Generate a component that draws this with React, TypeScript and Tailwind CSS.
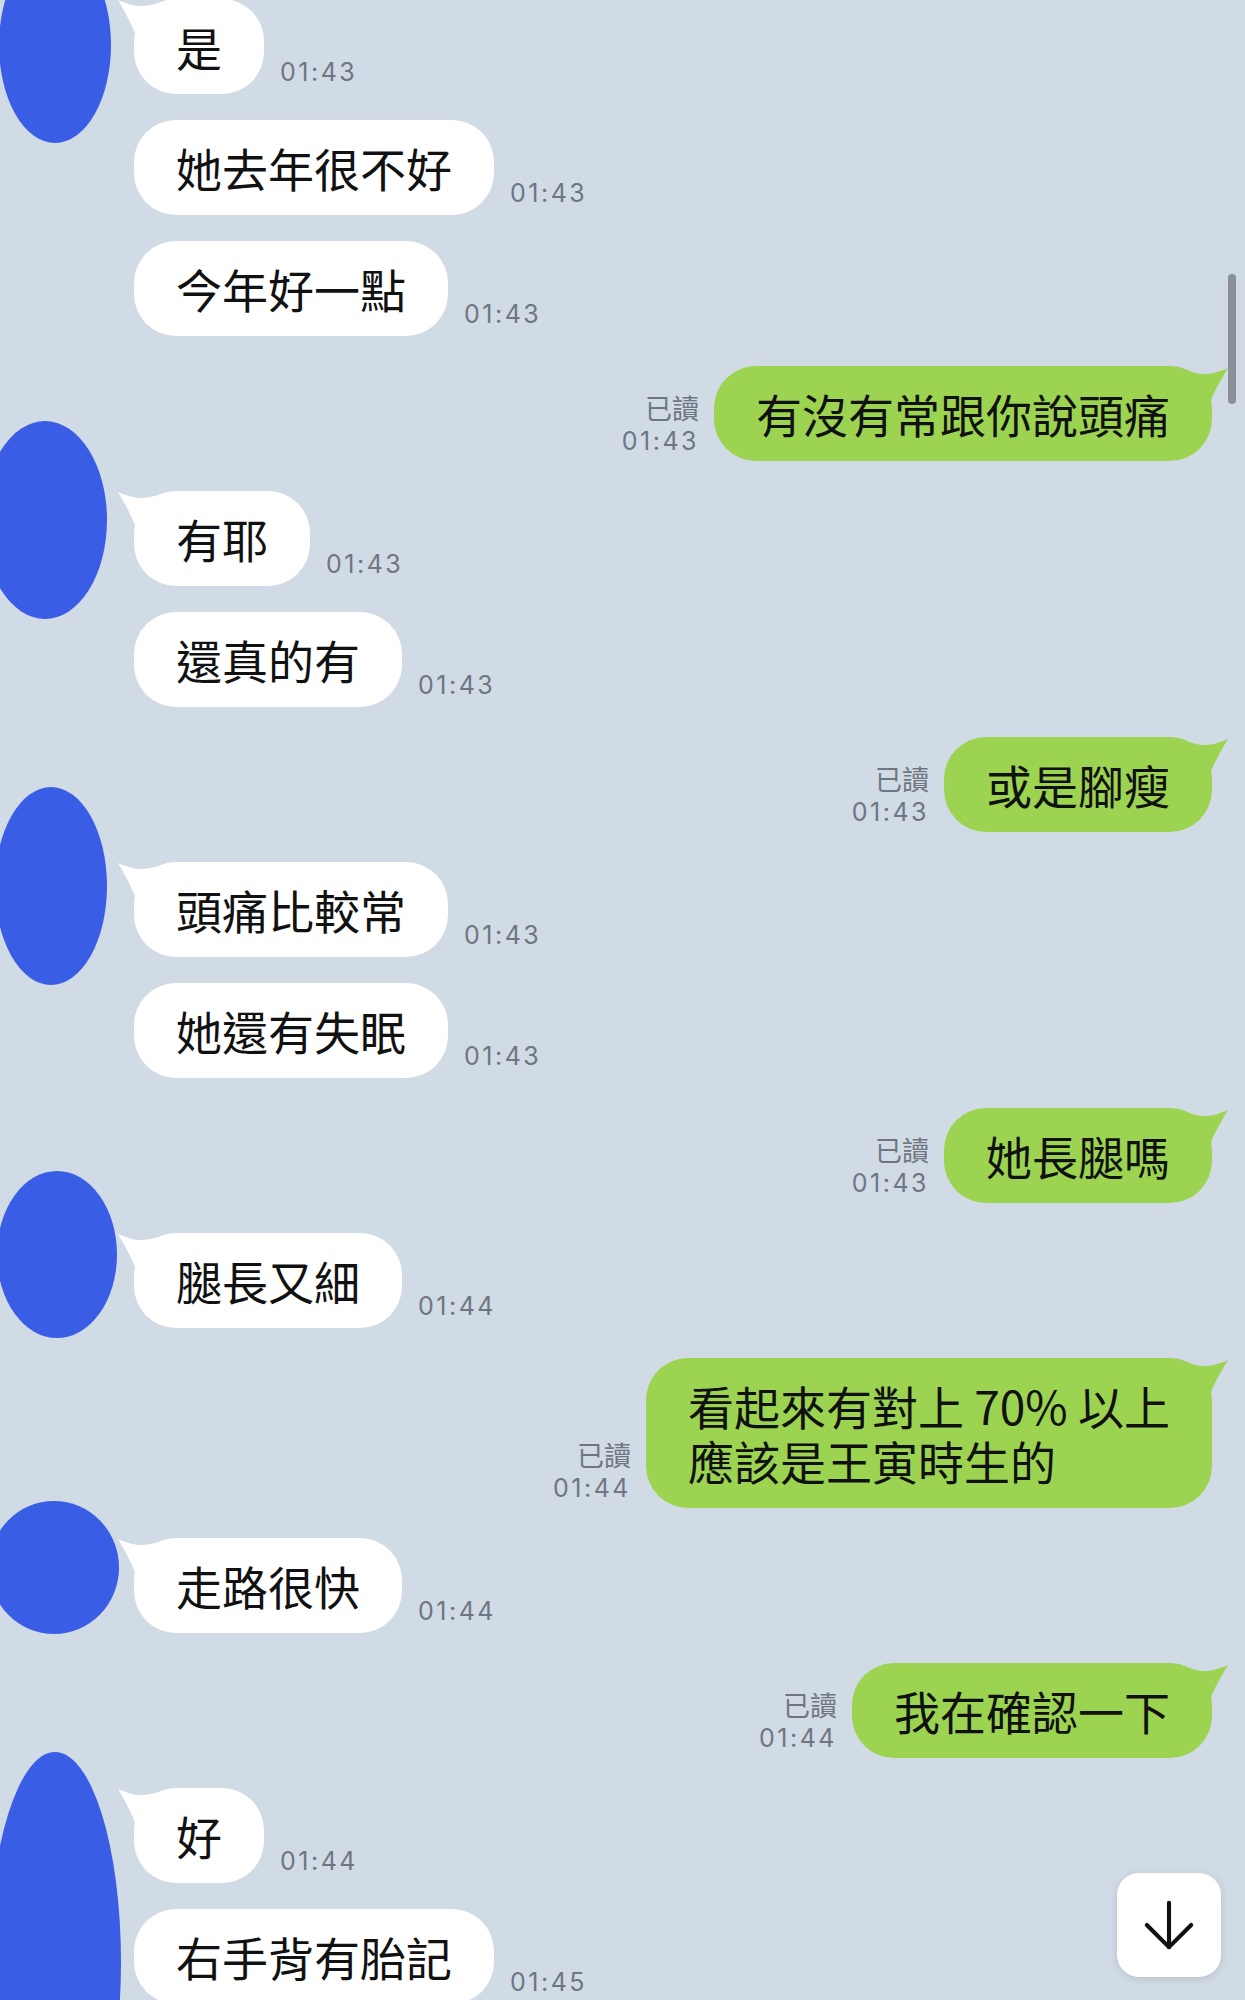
import React from 'react';

type Msg = { text: string[]; time: string };

interface LeftGroupProps {
  avatar: string;
  messages: Msg[];
}

const TIME_CLS = "font-['Inter',sans-serif] text-[25px] leading-[32px] tracking-[2.5px] text-[#6e7682]";

const LeftTail = () => (
  <svg className="absolute left-[-16px] top-0" width="46" height="46" viewBox="0 0 46 46">
    <path d="M0 1 C10 5 20 9 32 6 L46 3 L46 46 L17 46 L17 34 C12 22 6 11 0 1 Z" fill="#ffffff" />
  </svg>
);

const RightTail = () => (
  <svg className="absolute right-[-16px] top-0" width="46" height="46" viewBox="0 0 46 46">
    <path d="M46 2 C36 6 26 10 14 7 L0 3 L0 46 L29 46 L29 34 C34 22 40 12 46 2 Z" fill="#9cd452" />
  </svg>
);

const Lines = ({ text }: { text: string[] }) => (
  <span className="relative">
    {text.map((t, i) => (
      <React.Fragment key={i}>{i > 0 && <br />}{t}</React.Fragment>
    ))}
  </span>
);

const LeftBubble = ({ msg, tail }: { msg: Msg; tail: boolean }) => (
  <div className="flex items-end gap-[16px]">
    <div className="relative bg-white rounded-[42px] px-[42px] py-[20px] text-[46px] leading-[55px] text-[#111] whitespace-nowrap">
      {tail && <LeftTail />}
      <Lines text={msg.text} />
    </div>
    <span className={`${TIME_CLS} mb-[6px]`}>{msg.time}</span>
  </div>
);

const LeftGroup = ({ avatar, messages }: LeftGroupProps) => (
  <div className="relative flex flex-col gap-[26px]">
    {/* scribbled-over avatar */}
    <div className={`absolute rounded-[50%] bg-[#3a5de6] ${avatar}`} />
    {messages.map((m, i) => (
      <LeftBubble key={i} msg={m} tail={i === 0} />
    ))}
  </div>
);

const RightBubble = ({ msg }: { msg: Msg }) => (
  <div className="flex items-end justify-end gap-[15px]">
    <div className="flex flex-col items-end mb-[4px]">
      <span className="text-[27px] leading-[34px] text-[#6e7682]">已讀</span>
      <span className={TIME_CLS}>{msg.time}</span>
    </div>
    <div className="relative bg-[#9cd452] rounded-[42px] px-[42px] py-[20px] text-[46px] leading-[55px] text-[#111] whitespace-nowrap">
      <RightTail />
      <Lines text={msg.text} />
    </div>
  </div>
);

export default function App() {
  return (
    <div className="relative w-[1245px] h-[2000px] overflow-hidden bg-[#d1dbe5] font-['Noto_Sans_CJK_TC',sans-serif]">
      <div className="flex flex-col gap-[30px] pl-[134px] pr-[33px] mt-[-1px]">
        <LeftGroup
          avatar="left-[-135px] top-[-52px] w-[112px] h-[196px]"
          messages={[
            { text: ['是'], time: '01:43' },
            { text: ['她去年很不好'], time: '01:43' },
            { text: ['今年好一點'], time: '01:43' },
          ]}
        />
        <RightBubble msg={{ text: ['有沒有常跟你說頭痛'], time: '01:43' }} />
        <LeftGroup
          avatar="left-[-151px] top-[-70px] w-[124px] h-[198px]"
          messages={[
            { text: ['有耶'], time: '01:43' },
            { text: ['還真的有'], time: '01:43' },
          ]}
        />
        <RightBubble msg={{ text: ['或是腳瘦'], time: '01:43' }} />
        <LeftGroup
          avatar="left-[-139px] top-[-75px] w-[112px] h-[198px]"
          messages={[
            { text: ['頭痛比較常'], time: '01:43' },
            { text: ['她還有失眠'], time: '01:43' },
          ]}
        />
        <RightBubble msg={{ text: ['她長腿嗎'], time: '01:43' }} />
        <LeftGroup
          avatar="left-[-137px] top-[-62px] w-[120px] h-[167px]"
          messages={[{ text: ['腿長又細'], time: '01:44' }]}
        />
        <RightBubble msg={{ text: ['看起來有對上 70% 以上', '應該是王寅時生的'], time: '01:44' }} />
        <LeftGroup
          avatar="left-[-145px] top-[-37px] w-[130px] h-[133px]"
          messages={[{ text: ['走路很快'], time: '01:44' }]}
        />
        <RightBubble msg={{ text: ['我在確認一下'], time: '01:44' }} />
        <LeftGroup
          avatar="left-[-145px] top-[-36px] w-[132px] h-[420px]"
          messages={[
            { text: ['好'], time: '01:44' },
            { text: ['右手背有胎記'], time: '01:45' },
          ]}
        />
      </div>

      {/* scrollbar */}
      <div className="absolute left-[1228px] top-[274px] w-[8px] h-[130px] rounded-full bg-[#8b8f97]" />

      {/* jump to bottom */}
      <button className="absolute left-[1117px] top-[1873px] w-[104px] h-[104px] rounded-[22px] bg-white shadow-[0_2px_8px_rgba(0,0,0,0.12)] flex items-center justify-center">
        <svg width="76" height="76" viewBox="0 0 24 24" fill="none" stroke="#111" strokeWidth="1.3" strokeLinecap="round" strokeLinejoin="round">
          <path d="M12 5v14" />
          <path d="m19 12-7 7-7-7" />
        </svg>
      </button>
    </div>
  );
}
